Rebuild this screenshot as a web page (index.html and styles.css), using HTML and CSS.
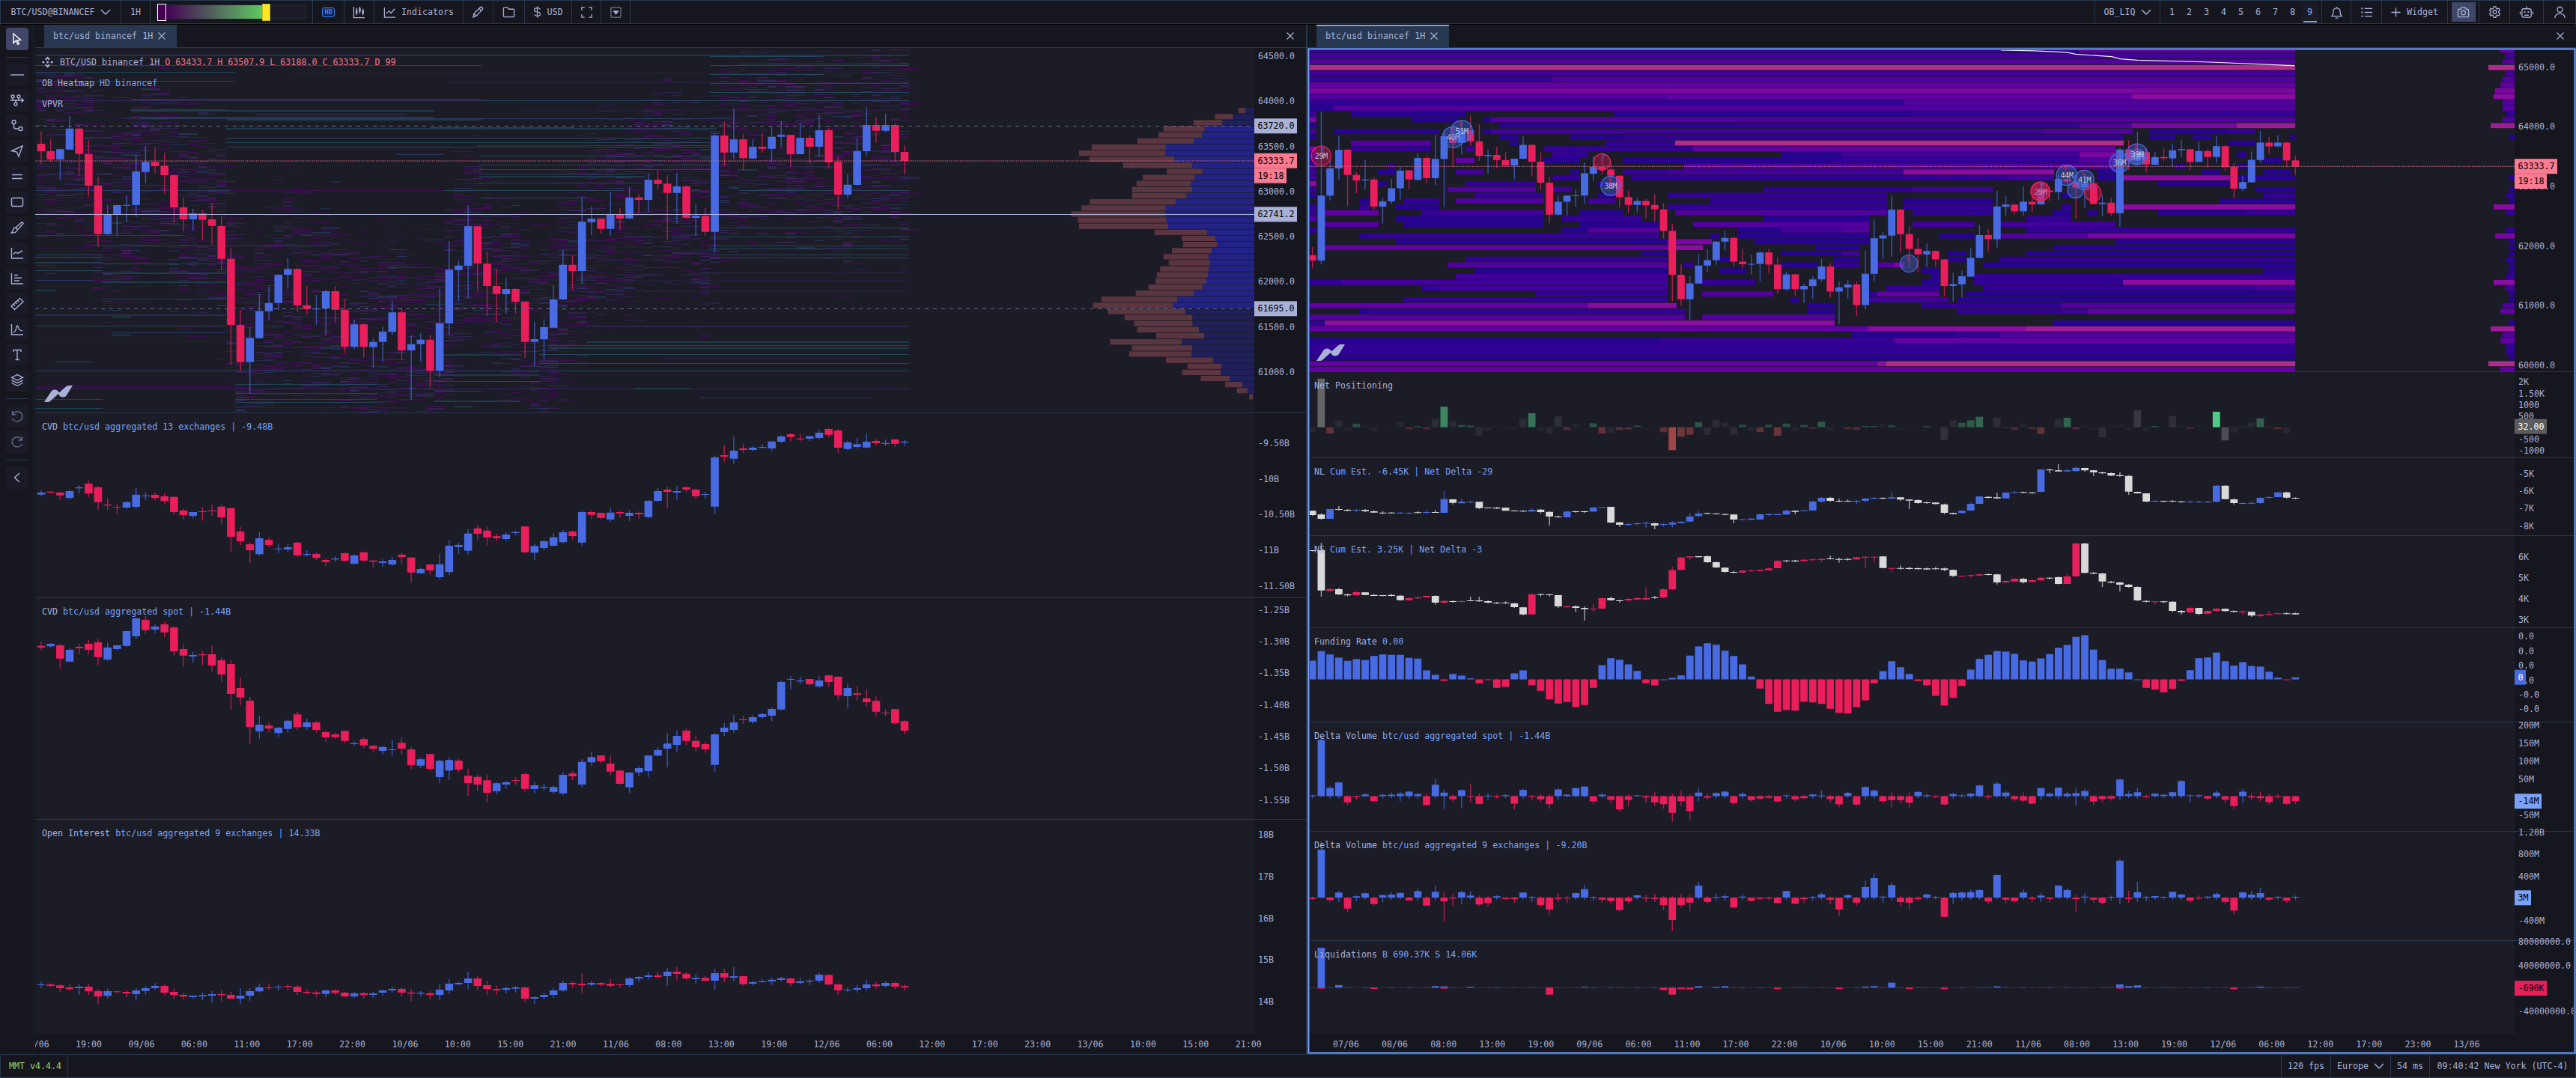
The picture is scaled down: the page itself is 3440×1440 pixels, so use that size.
FILE: index.html
```html
<!DOCTYPE html>
<html lang="en">
<head>
  <meta charset="UTF-8">
  <title>MMT</title>
  <link rel="stylesheet" href="styles.css">
</head>
<body>
  <svg class="defs" width="0" height="0">
    <symbol id="i-chevron" viewBox="0 0 14 8"><path d="M1 1l6 6 6-6"/></symbol>
    <symbol id="i-x" viewBox="0 0 10 10"><path d="M.5 .5l9 9M9.5 .5l-9 9"/></symbol>
    <symbol id="i-candles" viewBox="0 0 18 18"><path d="M1.500 1v15.500H17M5.500 3v10M10 1v9.500M14.500 4v9"/><path d="M4.200 5.500h2.600v5H4.200zM8.700 3h2.600v5H8.700zM13.200 6h2.600v5h-2.600z" class="fill"/></symbol>
    <symbol id="i-line" viewBox="0 0 18 18"><path d="M1.500 2v14H17M4 11l4-4 3 3 5-6"/></symbol>
    <symbol id="i-pencil" viewBox="0 0 18 18"><path d="M2 16l1-5L12.500 1.500q1.500-.5 2.500.5t.5 2.500L6.500 14zM11 4l3 3M3 11l3 3"/></symbol>
    <symbol id="i-folder" viewBox="0 0 18 18"><path d="M1.500 3.500q0-1.500 1.500-1.500h4l2 2.500h6q1.500 0 1.500 1.500v8q0 1.500-1.500 1.500H3q-1.500 0-1.500-1.500z"/></symbol>
    <symbol id="i-dollar" viewBox="0 0 12 18"><path d="M10.500 5Q9.500 3 6 3 1.500 3 1.500 6T6 9t4.500 3T6 15q-3.500 0-4.500-2M6 .5v17"/></symbol>
    <symbol id="i-full" viewBox="0 0 18 18"><path d="M2 6V2h4M12 2h4v4M16 12v4h-4M6 16H2v-4"/></symbol>
    <symbol id="i-dropbox" viewBox="0 0 18 18"><rect x="2" y="2" width="14" height="14" rx="1.500"/><path d="M4.500 6.500h9L9 12.500z" class="fill"/></symbol>
    <symbol id="i-bell" viewBox="0 0 18 18"><path d="M2 14.500q2-1.500 2-5.500 0-6 5-6t5 6q0 4 2 5.500zM7 17h4M9 1v2"/></symbol>
    <symbol id="i-list" viewBox="0 0 18 18"><path d="M6 3.500h11M6 9h11M6 14.500h11"/><path d="M1.500 2.500h2v2h-2zM1.500 8h2v2h-2zM1.500 13.500h2v2h-2z" class="fill"/></symbol>
    <symbol id="i-plus" viewBox="0 0 14 14"><path d="M7 .5v13M.5 7h13"/></symbol>
    <symbol id="i-camera" viewBox="0 0 18 18"><path d="M1.500 6q0-1.500 1.500-1.500h2L6.500 2h5L13 4.500h2q1.500 0 1.500 1.500v8.500q0 1-1.500 1H3q-1.500 0-1.500-1z"/><circle cx="9" cy="9.500" r="3"/></symbol>
    <symbol id="i-gear" viewBox="0 0 18 18"><path d="M7.500 1h3l.5 2.300 1.600.9 2.200-.7 1.500 2.600-1.700 1.600v1.800l1.700 1.600-1.500 2.600-2.200-.7-1.600.9-.5 2.300h-3L7 13.900l-1.600-.9-2.200.7-1.500-2.600 1.700-1.600V7.700L1.700 6.100l1.500-2.600 2.200.7L7 3.300z"/><circle cx="9" cy="8.600" r="2.500"/></symbol>
    <symbol id="i-bot" viewBox="0 0 20 18"><rect x="3.500" y="4" width="13" height="12" rx="2.500"/><path d="M10 4V.5M1 8v4M19 8v4M7 13h6"/><path d="M6.500 7.500h2v2h-2zM11.500 7.500h2v2h-2z" class="fill"/></symbol>
    <symbol id="i-user" viewBox="0 0 18 18"><circle cx="9" cy="5" r="3.700"/><path d="M2 17q0-6 7-6t7 6"/></symbol>
    <symbol id="i-cursor" viewBox="0 0 18 18"><path d="M4 2v12.500l3.300-3.200 2.400 5 1.800-.9-2.400-4.800 4.600-.2z"/></symbol>
    <symbol id="i-hline" viewBox="0 0 18 18"><path d="M-1 9h20"/></symbol>
    <symbol id="i-chain" viewBox="0 0 18 18"><path d="M0 9h17M14.500 6.500L17.500 9l-3 2.500M3 6v3M11 6v3M7 9v3"/><circle cx="3" cy="4" r="2"/><circle cx="11" cy="4" r="2"/><circle cx="7" cy="14" r="2"/></symbol>
    <symbol id="i-nodes" viewBox="0 0 18 18"><circle cx="4.500" cy="4" r="2.500"/><circle cx="13.500" cy="13" r="2.500"/><path d="M4.500 6.500V10q0 3 3 3H11"/></symbol>
    <symbol id="i-send" viewBox="0 0 18 18"><path d="M16 2L1.500 8.500l7 1.500 2.500 6z"/></symbol>
    <symbol id="i-parallel" viewBox="0 0 18 18"><path d="M2 6.500h14M2 11.500h14"/></symbol>
    <symbol id="i-rect" viewBox="0 0 18 18"><rect x="1.500" y="3.500" width="15" height="11" rx="1.500"/></symbol>
    <symbol id="i-brush" viewBox="0 0 18 18"><path d="M7 9l8-7q2 0 2 1.500L9.500 12zM7 9q-3 0-3.500 3T1 16q6 1 8.500-4z"/></symbol>
    <symbol id="i-trend" viewBox="0 0 18 18"><path d="M1.500 2v14H17M4 11q2-4 4-2.500t3 0L16 6"/></symbol>
    <symbol id="i-profile" viewBox="0 0 18 18"><path d="M1.500 2v14H17M5 4.500h5M5 8.300h10M5 12h7"/></symbol>
    <symbol id="i-ruler" viewBox="0 0 18 18"><path d="M1 12L12.500 1.500 17 6 5.500 16.500zM9.500 4.500l2 2M6.500 7l2 2M4 9.500l2 2"/></symbol>
    <symbol id="i-peak" viewBox="0 0 18 18"><path d="M1.500 2v14H17M4 13q3-1 3.500-5T9 4q1 0 1.500 3t5.500 4"/></symbol>
    <symbol id="i-text" viewBox="0 0 18 18"><path d="M4 5V2.500h10V5M9 2.500v13M6.500 15.500h5"/></symbol>
    <symbol id="i-layers" viewBox="0 0 18 18"><path d="M9 1.500l7.500 3.700L9 9 1.500 5.200zM1.500 9L9 12.700 16.500 9M1.500 12.500L9 16.300l7.500-3.800"/></symbol>
    <symbol id="i-undo" viewBox="0 0 18 18"><path d="M2.500 2v5h5M3 6.500q3-4.500 8-3.500 5.500 2 5 7-1.500 5.500-7 6-4.500 0-6.500-4"/></symbol>
    <symbol id="i-redo" viewBox="0 0 18 18"><path d="M15.500 2v5h-5M15 6.500q-3-4.500-8-3.500-5.500 2-5 7 1.500 5.500 7 6 4.500 0 6.500-4"/></symbol>
    <symbol id="i-left" viewBox="0 0 18 18"><path d="M12 3L5.500 9l6.500 6"/></symbol>
    <symbol id="i-binance" viewBox="0 0 16 16"><path class="fill" d="M8 0l3.700 3.800-1.600 1.500L8 3.200 5.900 5.300 4.300 3.800zM8 16l3.700-3.800-1.600-1.500L8 12.800l-2.100-2.100-1.600 1.500zM8 6l2 2-2 2-2-2zM2 6l2 2-2 2-2-2zM14 6l2 2-2 2-2-2z"/></symbol>
    <symbol id="i-logo" viewBox="0 0 38 22"><path class="fill" d="M0 22L10 7q1.500-1.500 4-1.500 4 0 5.500 3.500h1L29 1.500q1-1.500 4-1.500h5L30 13q-1.500 2.500-5 2.500-4 .5-5.500-4h-1L9 20q-1.500 2-4 2z"/></symbol>
  </svg>

  <div class="app">
    <header class="topbar">
      <div class="cell symbol">BTC/USD@BINANCEF <svg class="chev"><use href="#i-chevron"/></svg></div>
      <div class="cell tf">1H</div>
      <div class="cell slider-cell">
        <div class="slider"><i class="knob low"></i><i class="ramp"></i><i class="knob high"></i></div>
      </div>
      <div class="cell hd"><span>HD</span></div>
      <div class="cell w40"><svg class="icon"><use href="#i-candles"/></svg></div>
      <div class="cell indicators"><svg class="icon"><use href="#i-line"/></svg>Indicators</div>
      <div class="cell w40"><svg class="icon"><use href="#i-pencil"/></svg></div>
      <div class="cell w42"><svg class="icon"><use href="#i-folder"/></svg></div>
      <div class="cell usd"><svg class="dollar"><use href="#i-dollar"/></svg>USD</div>
      <div class="cell w39"><svg class="icon"><use href="#i-full"/></svg></div>
      <div class="cell w39 last"><svg class="icon"><use href="#i-dropbox"/></svg></div>
      <div class="spacer"></div>
      <div class="cell layout">OB_LIQ <svg class="chev"><use href="#i-chevron"/></svg></div>
      <div class="cell pages">
        <span>1</span><span>2</span><span>3</span><span>4</span><span>5</span><span>6</span><span>7</span><span>8</span><span class="on">9</span>
      </div>
      <div class="cell w39"><svg class="icon"><use href="#i-bell"/></svg></div>
      <div class="cell w41"><svg class="icon"><use href="#i-list"/></svg></div>
      <div class="cell widget-btn"><svg class="plus"><use href="#i-plus"/></svg>Widget</div>
      <div class="cell w42"><b class="shot"><svg class="icon"><use href="#i-camera"/></svg></b></div>
      <div class="cell w41"><svg class="icon"><use href="#i-gear"/></svg></div>
      <div class="cell w45"><svg class="icon wide"><use href="#i-bot"/></svg></div>
      <div class="cell w42"><svg class="icon"><use href="#i-user"/></svg></div>
    </header>

    <div class="main">
      <nav class="tools">
        <button class="on"><svg><use href="#i-cursor"/></svg></button>
        <hr>
        <button><svg><use href="#i-hline"/></svg></button>
        <button><svg><use href="#i-chain"/></svg></button>
        <button><svg><use href="#i-nodes"/></svg></button>
        <button><svg><use href="#i-send"/></svg></button>
        <button><svg><use href="#i-parallel"/></svg></button>
        <button><svg><use href="#i-rect"/></svg></button>
        <button><svg><use href="#i-brush"/></svg></button>
        <button><svg><use href="#i-trend"/></svg></button>
        <button><svg><use href="#i-profile"/></svg></button>
        <button><svg><use href="#i-ruler"/></svg></button>
        <button><svg><use href="#i-peak"/></svg></button>
        <button><svg><use href="#i-text"/></svg></button>
        <button><svg><use href="#i-layers"/></svg></button>
        <hr>
        <button class="off"><svg><use href="#i-undo"/></svg></button>
        <button class="off"><svg><use href="#i-redo"/></svg></button>
        <hr>
        <button><svg><use href="#i-left"/></svg></button>
      </nav>

      <section class="widget left">
        <div class="tabs">
          <div class="tab">btc/usd binancef 1H <svg class="x"><use href="#i-x"/></svg></div>
          <svg class="x close"><use href="#i-x"/></svg>
        </div>
        <div class="panes">
          <div class="pane l-price">
            <svg class="plot" id="l-price"></svg><svg class="axis" id="l-price-axis"></svg>
            <div class="legend">
              <p><svg class="coin"><use href="#i-binance"/></svg>BTC/USD binancef 1H <em>O 63433.7 H 63507.9 L 63188.0 C 63333.7 D 99</em></p>
              <p>OB Heatmap <a>HD binancef</a></p>
              <p>VPVR</p>
            </div>
            <svg class="logo"><use href="#i-logo"/></svg>
          </div>
          <div class="pane l-cvd">
            <svg class="plot" id="l-cvd"></svg><svg class="axis" id="l-cvd-axis"></svg>
            <div class="legend"><p>CVD <a>btc/usd aggregated 13 exchanges | -9.48B</a></p></div>
          </div>
          <div class="pane l-spot">
            <svg class="plot" id="l-spot"></svg><svg class="axis" id="l-spot-axis"></svg>
            <div class="legend"><p>CVD <a>btc/usd aggregated spot | -1.44B</a></p></div>
          </div>
          <div class="pane l-oi">
            <svg class="plot" id="l-oi"></svg><svg class="axis" id="l-oi-axis"></svg>
            <div class="legend"><p>Open Interest <a>btc/usd aggregated 9 exchanges | 14.33B</a></p></div>
          </div>
        </div>
        <div class="times" id="l-times"></div>
      </section>

      <section class="widget right">
        <div class="tabs">
          <div class="tab active">btc/usd binancef 1H <svg class="x"><use href="#i-x"/></svg></div>
          <svg class="x close"><use href="#i-x"/></svg>
        </div>
        <div class="panes">
          <div class="pane r-price">
            <svg class="plot" id="r-price"></svg><svg class="axis" id="r-price-axis"></svg>
            <svg class="logo"><use href="#i-logo"/></svg>
          </div>
          <div class="pane r-net">
            <svg class="plot" id="r-net"></svg><svg class="axis" id="r-net-axis"></svg>
            <div class="legend"><p>Net Positioning</p></div>
          </div>
          <div class="pane r-nl">
            <svg class="plot" id="r-nl"></svg><svg class="axis" id="r-nl-axis"></svg>
            <div class="legend"><p>NL <a>Cum Est. -6.45K | Net Delta -29</a></p></div>
          </div>
          <div class="pane r-ns">
            <svg class="plot" id="r-ns"></svg><svg class="axis" id="r-ns-axis"></svg>
            <div class="legend"><p>NS <a>Cum Est. 3.25K | Net Delta -3</a></p></div>
          </div>
          <div class="pane r-fund">
            <svg class="plot" id="r-fund"></svg><svg class="axis" id="r-fund-axis"></svg>
            <div class="legend"><p>Funding Rate <a>0.00</a></p></div>
          </div>
          <div class="pane r-dvs">
            <svg class="plot" id="r-dvs"></svg><svg class="axis" id="r-dvs-axis"></svg>
            <div class="legend"><p>Delta Volume <a>btc/usd aggregated spot | -1.44B</a></p></div>
          </div>
          <div class="pane r-dva">
            <svg class="plot" id="r-dva"></svg><svg class="axis" id="r-dva-axis"></svg>
            <div class="legend"><p>Delta Volume <a>btc/usd aggregated 9 exchanges | -9.20B</a></p></div>
          </div>
          <div class="pane r-liq">
            <svg class="plot" id="r-liq"></svg><svg class="axis" id="r-liq-axis"></svg>
            <div class="legend"><p>Liquidations <a>B 690.37K S 14.06K</a></p></div>
          </div>
        </div>
        <div class="times" id="r-times"></div>
      </section>
    </div>

    <footer class="status">
      <div class="ver">MMT v4.4.4</div>
      <div class="spacer"></div>
      <div class="st fps">120 fps</div>
      <div class="st region">Europe <svg class="chev"><use href="#i-chevron"/></svg></div>
      <div class="st ping">54 ms</div>
      <div class="st clock">09:40:42 New York (UTC-4)</div>
    </footer>
  </div>

  <script src="charts.js"></script>
</body>
</html>
```
FILE: styles.css
```css
* { box-sizing: border-box; }
html, body { height: 1440px; overflow: hidden; }
body {
  margin: 0;
  background: #16161e;
  color: #a9b1d6;
  font: 11.65px/16px 'DejaVu Sans Mono', 'Liberation Mono', monospace;
}
p, hr { margin: 0; }
svg { display: block; fill: none; stroke: currentColor; stroke-width: 1.4; overflow: visible; flex: none; }
svg .fill { fill: currentColor; stroke: none; }
.defs { position: absolute; }
.app { width: 3440px; height: 1440px; display: flex; flex-direction: column; overflow: hidden; }
.spacer { flex: 1; }
.icon { width: 17px; height: 17px; }
.icon.wide { width: 20px; }
.chev { width: 14px; height: 8px; }

/* top bar */
.topbar {
  height: 33px;
  flex: none;
  display: flex;
  border: 1px solid #27384d;
  border-bottom: 0;
  box-shadow: inset 0 -1px #000, inset 0 -2px #27384d;
}
.cell { height: 30px; display: flex; align-items: center; justify-content: center; border-right: 1px solid #27384d; white-space: pre; }
.cell:last-child { border-right: 0; }
.symbol { width: 161px; gap: 0; }
.tf { width: 39px; }
.slider-cell { width: 217px; }
.slider { display: flex; align-items: center; width: 200px; height: 20px; border: 1px solid #232838; border-radius: 4px; background: #1a1b26; }
.ramp { width: 128px; height: 18px; background: linear-gradient(90deg, #440154, #5ec962); }
.knob { width: 12px; height: 23px; border: 1px solid #fff; }
.low { background: #440154; }
.high { background: #fde725; border-color: #c9b81f; width: 11px; }
.hd { width: 42px; }
.hd span { border: 1.500px solid #3b82f6; background: #11244a; color: #3b82f6; border-radius: 3px; width: 17px; height: 13px; font-size: 8.500px; line-height: 10px; text-align: center; font-weight: bold; }
.w39 { width: 39px; }
.w40 { width: 40px; }
.w41 { width: 41px; }
.w42 { width: 42px; }
.w45 { width: 45px; }
.indicators { width: 119px; gap: 7px; }
.usd { width: 63px; gap: 7px; }
.dollar { width: 11px; height: 16px; }
.layout { width: 88px; border-left: 1px solid #27384d; gap: 0; }
.pages { width: 216px; }
.pages span { width: 23px; height: 27px; line-height: 27px; text-align: center; }
.pages .on { color: #7aa2f7; background: linear-gradient(#7aa2f7, #7aa2f7) center bottom / 18px 2px no-repeat #1a1b26; }
.widget-btn { width: 88px; gap: 8px; }
.plus { width: 13px; height: 13px; }
.shot { width: 32px; height: 26px; background: #404667; display: flex; align-items: center; justify-content: center; }

.main { flex: 1; min-height: 0; display: flex; }

/* drawing tools */
.tools { width: 47px; padding: 4px 9px 0 8px; border-right: 1px solid #000; box-shadow: inset -1px 0 #27384d; display: flex; flex-direction: column; gap: 4px; }
.tools button { width: 30px; height: 30px; flex: none; padding: 6px; border: 0; border-radius: 4px; background: #1a1b26; color: #a9b1d6; }
.tools svg { width: 18px; height: 18px; }
.tools .on { background: #404667; color: #fff; }
.tools .off { color: #646a86; }
.tools hr { width: 30px; border: 0; height: 1px; background: #27384d; margin: 5px 0 4px; flex: none; }

/* chart widgets */
.widget { display: flex; flex-direction: column; position: relative; }
.left { width: 1699px; border-right: 2px solid #27384d; }
.right { width: 1694px; }
.right::after {
  content: "";
  position: absolute;
  inset: 31px 0 0;
  box-shadow: inset 0 0 0 1px #4a68ac, inset 0 0 0 2px #7aa2f7, inset 0 0 0 3px #3c5590;
}
.tabs { height: 31px; flex: none; display: flex; align-items: center; padding-left: 12px; border-bottom: 1px solid #27384d; }
.tab { width: 177px; height: 30px; display: flex; align-items: center; padding-left: 12px; background: #283850; white-space: pre; }
.tab.active { box-shadow: inset 0 2px #7aa2f7; }
.x { width: 10px; height: 10px; stroke-width: 1.2; }
.close { margin: 0 16px 0 auto; }
.panes { flex: none; background: #1b1c26; }
.pane { display: flex; position: relative; border-bottom: 1px solid #27384d; }
.pane:last-child { border-bottom: 0; }
.plot { flex: 1; height: 100%; overflow: hidden; stroke: none; }
.axis { width: 69px; height: 100%; background: #16161e; stroke: none; }
.right .axis { width: 82px; }
.axis text { fill: #a9b1d6; }
.legend { position: absolute; left: 9px; top: 4px; }
.legend p { height: 28px; line-height: 28px; white-space: pre; display: flex; }
.legend em { font-style: normal; color: #f7768e; }
.legend a { color: #7aa2f7; }
.coin { width: 15px; height: 16px; margin: 6px 9px 0 0; }
.logo { position: absolute; left: 12px; bottom: 14px; width: 38px; height: 22px; }
.l-price { height: 488px; }
.l-price .legend { top: 5px; }
.l-cvd { height: 247px; }
.l-spot { height: 296px; }
.l-oi { height: 286px; }
.r-price { height: 433px; }
.r-net { height: 115px; }
.r-nl { height: 104px; }
.r-ns { height: 123px; }
.r-fund { height: 126px; }
.r-dvs, .r-dva { height: 146px; }
.r-liq { height: 124px; }
.times { flex: 1; display: flex; overflow: hidden; line-height: 28px; background: #16161e; }
.times span { flex: none; text-align: center; }
#l-times span { width: 70.400px; }
#l-times span:first-child { margin-left: -34px; }
#r-times span { width: 65.070px; }
#r-times span:first-child { margin-left: 19px; }

/* plot colours */
.up { fill: #486be4; }
.down { fill: #ea1e5b; }
.white { fill: #d9d9d9; }
.wick { opacity: .72; }
.poc { stroke: #a9b1d6; stroke-width: 1; }
.area { stroke: #646a86; stroke-width: 1; stroke-dasharray: 5 6; }
.last { stroke: #d0667e; stroke-width: 1; stroke-dasharray: 1.500 1; }
.vwap { fill: none; stroke: #f4eaf8; stroke-width: 1.2; }
.bubble { stroke-width: 1.2; fill-opacity: .38; }
.bubble.up { stroke: #486be4; }
.bubble.down { stroke: #ea1e5b; }
.tag { fill: #b9bfdd; font-size: 10.500px; letter-spacing: -.7px; text-anchor: middle; }

/* status bar */
.status { height: 32px; flex: none; display: flex; border: 1px solid #27384d; }
.ver { width: 90px; padding-left: 11px; line-height: 31px; color: #9ece6a; border-right: 1px solid #27384d; }
.st { display: flex; align-items: center; justify-content: center; border-left: 1px solid #27384d; white-space: pre; }
.fps { width: 66px; }
.region { width: 80px; gap: 0; }
.ping { width: 52px; }
.clock { width: 195px; }
```
FILE: charts.js
```js
const NS = 'http://www.w3.org/2000/svg';

function add(id, tag, attrs, text) {
  const el = document.createElementNS(NS, tag);
  for (const k in attrs) el.setAttribute(k, attrs[k]);
  if (text !== undefined) el.textContent = text;
  document.getElementById(id).appendChild(el);
  return el;
}

const CLS = { b: 'up', r: 'down', w: 'white' };
const box = (x, y, w, h) => `M${x.toFixed(2)} ${y.toFixed(2)}h${w}v${h.toFixed(2)}h${-w}z`;

// "r348 396 426 476" = colour, high, body top, body bottom, low
function parse(s) {
  const t = s.trim().split(/\s+/), out = [];
  for (let i = 0; i < t.length; i += 4) {
    out.push({ c: t[i][0], v: [+t[i].slice(1), +t[i + 1], +t[i + 2], +t[i + 3]] });
  }
  return out;
}

const LEFT = { x0: 8, step: 12.67, body: 10.6 };
const RIGHT = { x0: 6.7, step: 11.72, body: 9.8 };

function candles(id, data, grid, y) {
  const body = { b: '', r: '', w: '' }, wick = { b: '', r: '', w: '' };
  data.forEach((d, i) => {
    const x = grid.x0 + i * grid.step;
    const [h, t, b, l] = d.v.map(y);
    wick[d.c] += box(x - 0.7, h, 1.4, l - h);
    body[d.c] += box(x - grid.body / 2, t, grid.body, Math.max(b - t, 1));
  });
  for (const c in body) {
    if (!body[c]) continue;
    add(id, 'path', { d: wick[c], class: CLS[c] + ' wick' });
    add(id, 'path', { d: body[c], class: CLS[c] });
  }
}

function axis(id, labels, badges) {
  for (const [text, y] of labels) add(id, 'text', { x: 5, y: y + 4 }, text);
  for (const [text, y, w, bg, fg] of badges || []) {
    add(id, 'rect', { x: 0, y: y - 10, width: w, height: 20, fill: bg });
    add(id, 'text', { x: 4.500, y: y + 4, style: `fill:${fg}` }, text);
  }
}

/* ---- price ---- */
const early = parse(`
r954 1004 1036 1084 b132 642 1036 1060 b417 477 642 671 b278 365 477 545 r359 364 517 704 r500 517 550 627
b427 545 550 604 r532 545 709 724 b657 677 709 812 b541 598 677 692 b467 491 598 666 r489 489 545 603
b385 414 547 553 r397 414 536 567 b273 420 536 579 b243 282 420 712 r228 285 323 465 b187 243 323 394
r157 246 314 341 r210 314 402 432 b361 396 403 509`);

const price = parse(`
r348 396 426 476 r378 426 459 470 b418 418 459 543 b285 335 419 421 r335 335 437 525 r381 437 564 608
r529 564 758 809 b641 680 758 762 b640 642 680 765 b605 641 644 708 b441 507 642 690 b404 469 509 554
r410 469 486 514 r432 484 522 597 r519 522 651 713 r612 651 699 747 b657 675 699 744 r663 675 701 782
r633 699 725 800 r688 726 857 903 r813 857 1122 1281 r1061 1122 1271 1308 b1131 1174 1271 1397
b998 1067 1175 1177 b968 1034 1067 1105 b919 921 1034 1062 b854 898 921 977 r893 898 1043 1071
r966 1043 1059 1082 b1002 1056 1060 1121 b980 987 1056 1163 r966 987 1061 1112 r1017 1061 1210 1236
b1101 1120 1210 1218 r1116 1120 1210 1253 b1175 1190 1211 1293 b1131 1150 1190 1270 b1026 1072 1150 1163
r1052 1072 1224 1262 b1164 1199 1224 1421 b1155 1181 1199 1269 r1162 1181 1306 1373 b977 1116 1306 1333
b786 901 1116 1162 b864 884 902 1026 b643 727 885 1014 r724 727 876 987 r828 876 966 1086
r897 966 998 1110 b933 978 999 1077 r975 978 1029 1077 r1029 1029 1190 1255 b1110 1179 1190 1284
b1098 1131 1180 1260 b962 1020 1133 1133 b820 881 1020 1022 r846 881 906 980 b614 708 906 957
b647 696 710 762 r696 696 737 756 b588 680 737 765 r654 680 696 742 b570 612 695 698 r597 611 621 675
b516 541 621 669 r500 541 557 579 r522 556 593 783 b512 567 593 715 r563 567 693 696 b638 685 693 768
r654 685 749 765 b354 363 749 833 r307 363 431 486 b255 379 431 459 r357 379 454 501 b378 408 455 456
r354 408 416 433 b326 368 416 467 b305 361 368 411 r361 361 438 489 b312 372 438 438 r361 372 408 474
b280 342 408 444 r334 342 470 491 r447 468 600 659 b519 560 600 615 b374 425 561 564 b249 321 426 443
r288 321 344 390 b276 321 344 350 r316 321 429 468 r402 429 465 519`);

const yL = v => v / 3 - 4;
const yR = v => 55.8 + v * 0.2203;

/* ---- order book heatmap, left ---- */
let seed = 90607;
function rnd() {
  seed = (seed * 1664525 + 1013904223) % 4294967296;
  return seed / 4294967296;
}
const HEAT = { p: '#4c0a64', v: '#432a74', b: '#2f4478', d: '#2a2246', t: '#22586a', g: '#1f7a6c' };
const heat = { p: '', v: '', b: '', d: '', t: '', g: '' };
price.forEach((d, i) => {
  const x = LEFT.x0 + (i - 0.5) * LEFT.step;
  const mid = yL((d.v[1] + d.v[2]) / 2);
  for (let n = 0; n < 58; n++) {
    const far = n % 4 ? 22 + rnd() * 85 : rnd() * 160;
    const y = Math.round(mid + (rnd() < 0.5 ? -far : far));
    if (y < 1 || y > 486) continue;
    const r = rnd(), c = r < 0.5 ? 'p' : r < 0.7 ? 'd' : r < 0.92 ? 'v' : r < 0.995 ? 'b' : 't';
    const h = rnd() < 0.15 ? 2 : 1;
    heat[c] += box(x, y, 12.67 * (rnd() < 0.25 ? 2 : 1), h);
  }
});
for (const c in heat) add('l-price', 'path', { d: heat[c], fill: HEAT[c], opacity: c === 'p' ? 0.62 : 0.5 });

// resting orders: x1, x2, y, colour, thickness
[[0, 1167, 9, 'b', 2], [901, 1053, 11, 't', 1], [0, 596, 23, 't', 1], [901, 1167, 23, 't', 1], [940, 1167, 21, 't', 1],
 [0, 267, 32, 't', 1], [343, 1167, 33, 'd', 2], [901, 1053, 35, 't', 1], [0, 267, 44, 't', 1], [550, 950, 45, 'd', 2],
 [901, 1167, 47, 't', 1], [901, 1167, 59, 't', 1], [128, 596, 68, 't', 2], [0, 1167, 70, 'v', 1], [128, 255, 82, 'b', 1],
 [596, 1167, 70, 't', 1], [648, 1167, 82, 'd', 2], [128, 533, 83, 't', 2], [293, 495, 88, 'b', 1], [128, 533, 92, 't', 2],
 [140, 930, 94, 'b', 1], [255, 596, 95, 't', 2], [528, 720, 106, 't', 1], [255, 910, 107, 't', 2], [255, 901, 120, 't', 1],
 [255, 901, 126, 't', 1], [590, 901, 130, 'b', 1], [255, 901, 132, 't', 1], [482, 546, 142, 'b', 1], [593, 901, 144, 't', 1],
 [593, 901, 156, 't', 1], [593, 901, 162, 't', 1], [593, 800, 168, 't', 1], [593, 815, 171, 't', 2], [593, 810, 180, 't', 1],
 [0, 260, 190, 'b', 1], [267, 546, 190, 'p', 1], [546, 786, 190, 't', 1], [940, 1167, 190, 't', 1], [593, 736, 200, 't', 1],
 [901, 1167, 240, 't', 1], [901, 1167, 252, 't', 1], [901, 1167, 264, 't', 1], [90, 392, 264, 't', 1], [901, 1167, 268, 't', 1],
 [901, 1167, 276, 't', 1], [0, 90, 276, 't', 1], [901, 1167, 280, 't', 1], [0, 90, 279, 't', 2], [0, 90, 286, 't', 2],
 [90, 240, 288, 't', 1], [0, 90, 297, 't', 1], [90, 255, 300, 't', 2], [915, 1167, 299, 'd', 2], [0, 77, 310, 'b', 1],
 [90, 255, 312, 't', 2], [780, 1167, 310, 'd', 2], [0, 200, 250, 'b', 1], [825, 1167, 324, 'd', 2], [0, 27, 323, 't', 2],
 [90, 260, 335, 'b', 1], [0, 255, 356, 'b', 2], [103, 128, 359, 'g', 1], [0, 255, 371, 't', 1], [736, 1167, 371, 'v', 2],
 [103, 128, 383, 'g', 1], [103, 255, 380, 'b', 1], [0, 260, 392, 'p', 1], [736, 1167, 392, 't', 2], [685, 1167, 397, 't', 1],
 [685, 1167, 400, 't', 2], [540, 650, 409, 't', 2], [673, 1167, 409, 't', 1], [837, 1129, 414, 'v', 1], [673, 1167, 421, 't', 1],
 [27, 77, 419, 't', 1], [0, 700, 431, 'b', 1], [700, 1167, 431, 't', 1], [533, 673, 436, 't', 2], [533, 673, 445, 't', 1],
 [267, 457, 449, 't', 1], [0, 290, 452, 'p', 1], [0, 1167, 455, 'v', 1], [800, 875, 455, 'g', 1], [533, 596, 458, 't', 1],
 [267, 457, 461, 't', 1], [0, 90, 469, 't', 1], [267, 457, 469, 't', 1], [888, 1117, 467, 'b', 1], [267, 457, 473, 't', 1],
 [533, 648, 471, 't', 2], [560, 584, 479, 'g', 1], [0, 90, 481, 't', 1], [267, 500, 480, 'p', 1]
].forEach(([a, b, y, c, h]) => add('l-price', 'rect', { x: a, y, width: b - a, height: h, fill: HEAT[c], opacity: h > 1 ? 0.5 : 0.72 }));

/* ---- volume profile: left end and split of each row, measured to x = 1176 ---- */
const profile = [[1119, 1144], [1034, 1099], [956, 1061], [848, 997], [830, 988], [754, 957], [589, 857], [543, 854],
 [580, 888], [702, 952], [860, 989], [773, 961], [751, 946], [735, 952], [735, 932], [581, 892], [552, 857], [515, 854],
 [539, 859], [543, 865], [816, 1006], [914, 1036], [919, 1041], [879, 1022], [848, 1011], [867, 1017], [836, 1011],
 [824, 1009], [820, 1003], [794, 989], [748, 957], [624, 898], [593, 882], [647, 928], [708, 953], [742, 953], [753, 976],
 [822, 996], [655, 914], [734, 952], [724, 949], [857, 1027], [935, 1057], [916, 1055], [983, 1087], [1071, 1133],
 [1113, 1151], [1157, 1171]];
profile.forEach(([a, b], k) => {
  const y = yL(263 + k * 24.4) - 3.6;
  const px = v => 1628 - (1176 - v) / 2.703;
  add('l-price', 'rect', { x: px(a), y, width: px(b) - px(a), height: 7.2, fill: '#5b3641' });
  add('l-price', 'rect', { x: px(b), y, width: 1628 - px(b), height: 7.2, fill: k > 2 && k < 33 ? '#232387' : '#1f1f5a' });
});

candles('l-price', price, LEFT, yL);
add('l-price', 'path', { d: 'M0 104.500H1628M0 348.500H1628', class: 'area' });
add('l-price', 'path', { d: 'M0 151H1628', class: 'last' });
add('l-price', 'path', { d: 'M0 222.500H1628', class: 'poc' });
axis('l-price-axis',
  [['64500.0', 10.7], ['64000.0', 70.7], ['63500.0', 131.5], ['63000.0', 191.5], ['62500.0', 252], ['62000.0', 312], ['61500.0', 372.5], ['61000.0', 432.5]],
  [['63720.0', 104.3, 57, '#a9b1d6', '#000'], ['63333.7', 150.7, 57, '#fa7a91', '#000'], ['19:18', 170.7, 43, '#fa7a91', '#000'],
   ['62741.2', 222.3, 57, '#a9b1d6', '#000'], ['61695.0', 348.3, 57, '#a9b1d6', '#000']]);

/* ---- liquidity heatmap, right: "x:level" steps per price row, level 0 = nothing ---- */
const PLASMA = ['', '#270293', '#330098', '#42009c', '#5200a0', '#6200a6', '#7c06a5', '#8c0ba2', '#a01b98', '#b12b8d'];
const DEPTH = [0, 8, 11, 12, 16, 19, 26, 28, 32, 35];
const rows = `0:2 1028:5
0:3
0:4
0:9
0:3
0:2 324:4
0:5
0:6
0:4 477:5 1098:7
0:2 793:4
0:1 32:4
0:3 9:0 55:1 208:0 406:1 805:2
0:6 9:0 137:1 197:0 231:1 242:4
0:1 9:0 254:1 570:2 1028:4 1098:6 1238:8
0:3 9:0 32:1 173:0 231:1 242:3 980:4 1099:0 1122:1 1227:2 1263:0
0:1 9:0 254:1 279:0 348:1 418:2 1087:0 1122:1 1157:0 1179:1 1205:0 1309:1
55:4 162:0 266:1 279:0 395:2 488:9 1087:0 1227:1 1263:0
0:6 9:0 55:2 162:0 208:3 220:0 313:2 512:5 1076:0
0:2 9:0 324:2 372:0 629:1 711:3 1028:6 1076:0 1238:1 1251:0
0:1 9:0 195:5 220:0 313:1 361:0 418:1 699:2 1028:4 1076:0 1274:1 1298:0
0:3 9:0 103:1 115:0 500:4 1076:0 1156:1 1170:0 1238:1 1251:0
0:3 9:0 90:1 115:0 195:3 232:0 348:1 361:0 418:2 477:3 793:7 994:0 1051:1 1076:0 1191:1 1216:0 1274:1 1310:0
0:3 9:0 324:2 361:0 430:2 933:3 994:0 1051:1 1076:0 1085:7 1229:1
0:7 9:0 90:1 103:0 208:2 302:0 384:1 420:0 1132:1 1229:0
0:2 9:0 184:4 302:0 324:3 350:0 606:2 804:3 912:0 1262:1
0:2 9:0 220:2 313:0 384:1 410:0 477:2 771:0 1004:1 1017:0 1274:2
67:1 80:0 126:2 173:0 195:4 313:0 372:3 408:0 535:2 771:0 793:1 912:0 1215:1
0:2 9:0 67:2 80:0 114:1 173:0 477:2 771:0 793:2 912:0 1004:2 1017:0 1085:7
0:2 9:0 20:5 92:0 149:2 172:3 313:0 360:1 419:0 488:4 771:0 805:2 912:0 992:1 1017:0 1039:1 1052:0 1132:1 1250:2
0:4 9:0 114:1 313:0 336:2 443:0 606:1 747:0 957:2 1017:0
20:4 92:0 126:1 313:0 360:1 466:0 512:4 747:0 805:3 888:0 918:3 1076:0
0:2 9:0 336:1 372:4 466:0 571:1 629:3 711:4 747:0 957:2
67:1 78:2 466:0 535:1 548:0 571:1 747:0 840:1 888:0 918:4 1039:6
114:1 478:6 537:0 594:1 747:0 1075:1
20:5 478:7 525:0 676:1 735:0 992:1
442:1 478:0 629:1 711:3 735:0 852:1 877:0 957:1
208:2 478:0 547:1 560:0 699:1 735:0 852:1 877:0 922:2
184:4 478:0 500:2 513:0 629:1 678:0 699:2 735:0 758:4 781:6 794:0 899:1
220:1 478:0 547:1 583:0 817:1 841:0 1274:1
195:3 478:0 829:1 841:0 887:2
0:2 43:3 478:0 524:2 595:0 817:1 841:0 887:2 1086:7
149:2 172:3 478:0 770:2 841:0 899:2 1261:3
301:2 478:0 524:4 619:0 745:2 758:5 841:0 876:1
126:2 478:0 641:1 654:0 745:3 853:0 864:1
0:5 372:7 490:0 664:1 701:0 817:2 1004:4
67:1 78:2 501:0 664:1 701:0 864:2 1004:3 1039:5
0:4 501:0 524:4 701:0
0:2 20:7 701:0 992:1
0:5 746:7 957:8
724:1 863:2 922:4
0:1 466:2 781:5
0:2
0:2
0:1
0:5 758:7 770:9
0:5`.split('\n');
rows.forEach((row, k) => {
  const y = 3 + k * 7.757 - 3.4;
  const steps = row.split(' ').map(s => s.split(':').map(Number));
  steps.forEach(([x, level], i) => {
    if (!level) return;
    const end = i + 1 < steps.length ? steps[i + 1][0] : 1316;
    add('r-price', 'rect', { x: x ? x + 3 : 0, y, width: end - x + (x ? 0 : 3), height: 6.7, fill: PLASMA[level] });
  });
  const lastLevel = steps[steps.length - 1][1];
  if (lastLevel) add('r-price', 'rect', { x: 1612 - DEPTH[lastLevel], y, width: DEPTH[lastLevel], height: 6.7, fill: PLASMA[lastLevel] });
});

candles('r-price', early.concat(price), RIGHT, yR);
add('r-price', 'path', { d: 'M926 3L970 3.800 1014 5.800 1026 8.300 1074 11.700 1085 14.700 1108 16.300 1206 19 1318 23.700', class: 'vwap' });

[[18.3, 144.3, 13.2, 'r', '29M'], [194.5, 119.3, 14.2, 'b', '40M'], [206, 111.3, 14.5, 'b', '51M'], [393.4, 152.3, 11, 'r', ''],
 [404.8, 184.3, 13, 'b', '38M'], [803.2, 288, 11.5, 'b', ''], [978.7, 191.7, 12.8, 'r', '29M'], [979, 192, 12, 'r', ''],
 [1013.9, 170, 13.7, 'b', '44M'], [1025.6, 190, 10.7, 'b', ''], [1037.4, 176.3, 13, 'b', '41M'], [1049, 193.7, 11, 'r', ''],
 [1084.3, 153.3, 13, 'b', '36M'], [1107.8, 145, 10, 'b', '37M'], [1107.8, 142.3, 14.2, 'b', '39M']
].forEach(([x, y, r, c, t]) => {
  add('r-price', 'circle', { cx: x, cy: y, r, class: 'bubble ' + CLS[c] });
  // share of the opposite side
  add('r-price', 'path', { d: `M${x} ${y}V${y - r}A${r} ${r} 0 0 ${c === 'b' ? 0 : 1} ${c === 'b' ? x - r * 0.3 : x + r * 0.4} ${y - r * 0.93}z`, class: c === 'b' ? 'down' : 'up', opacity: 0.4 });
  if (t) add('r-price', 'text', { x, y: y + 4, class: 'tag' }, t);
});
add('r-price', 'path', { d: 'M0 158.300H1612', class: 'last' });
axis('r-price-axis',
  [['65000.0', 25.7], ['64000.0', 105], ['63000.0', 184.7], ['62000.0', 264.5], ['61000.0', 344.3], ['60000.0', 424]],
  [['63333.7', 158.2, 57, '#fa7a91', '#000'], ['19:18', 178.2, 43, '#fa7a91', '#000']]);

/* ---- left sub panes ---- */
const cvd = parse(`
b315 324 332 339 r318 320 324 329 r322 324 335 354 b314 318 346 350 b294 303 307 328 r276 288 328 342
r296 303 362 393 r346 372 376 393 r369 381 384 409 b357 362 384 390 b306 332 381 390 b323 336 339 354
r324 333 346 354 r327 339 358 371 r340 341 402 413 r387 395 414 431 b402 402 417 426 r383 399 402 437
r373 396 399 417 r373 380 423 449 r384 386 501 561 r461 480 519 535 r524 531 555 606 b483 507 571 575
r503 513 534 543 b529 548 551 567 b531 543 552 561 r522 524 576 581 b555 570 574 580 r565 570 585 594
r589 594 602 619 b579 588 592 601 r563 567 597 601 b570 576 609 613 r561 563 596 603 r594 596 601 624
b591 600 606 622 b581 594 612 617 r563 573 582 609 r582 584 644 684 b624 630 647 649 r609 612 636 654
b570 611 663 671 b513 537 642 655 b524 534 542 570 b470 488 557 572 r454 467 489 514 r459 476 504 537
r489 499 507 519 b483 492 510 518 b477 482 486 495 r459 460 563 567 b527 538 565 594 b516 519 546 555
b486 503 537 538 b474 483 523 528 r476 480 498 512 b398 402 524 537 r396 402 413 429 r405 405 425 430
b384 404 432 441 r399 402 407 425 b393 405 417 437 r400 405 411 429 b353 357 422 426 b306 318 357 361
r300 312 321 387 b297 318 324 353 r297 303 312 321 r308 312 339 350 b321 330 333 348 b175 183 380 411
r135 174 180 200 b100 156 188 209 r128 147 153 166 b138 144 153 159 b130 141 145 147 b117 119 147 158
b94 99 120 125 r86 90 101 119 r90 107 111 117 b96 98 108 117 b71 84 105 111 r65 69 92 102
r70 75 144 165 b118 123 149 155 b105 130 141 149 b86 120 143 147 r109 117 126 135 b111 125 129 138
r110 111 128 140 b114 120 124 137`);
candles('l-cvd', cvd, LEFT, v => v / 3 - 2);
axis('l-cvd-axis', [['-9.50B', 39.5], ['-10B', 88], ['-10.50B', 135], ['-11B', 183], ['-11.50B', 231]]);

const spot = parse(`
r921 938 945 956 b926 930 940 945 r930 936 989 1029 b946 954 1001 1001 r928 942 948 973 r915 930 954 973
r911 924 983 1015 b926 945 993 998 b935 936 951 956 b878 879 938 942 b825 828 899 909 r819 834 875 890
b853 861 873 888 r842 852 884 904 r858 865 960 976 r933 951 977 1022 b962 975 981 1006 r960 972 976 1017
r938 972 1017 1041 r984 996 1053 1083 r995 1011 1131 1194 r1064 1107 1145 1176 r1143 1158 1263 1329
b1218 1254 1280 1311 r1242 1258 1270 1285 b1263 1266 1288 1304 b1233 1238 1271 1286 r1203 1213 1264 1274
b1230 1245 1263 1275 r1239 1245 1275 1287 r1277 1284 1305 1323 r1286 1293 1304 1311 r1278 1279 1319 1328
b1320 1328 1332 1338 r1305 1312 1337 1347 r1335 1339 1351 1365 b1340 1343 1359 1375 b1314 1353 1356 1377
r1305 1327 1350 1374 r1344 1353 1416 1432 b1386 1393 1418 1428 r1370 1372 1431 1440 b1395 1399 1464 1488
b1384 1396 1438 1476 r1391 1398 1434 1446 r1430 1459 1488 1540 r1455 1463 1494 1520 r1454 1477 1527 1565
b1484 1489 1521 1534 b1479 1485 1494 1512 r1464 1476 1479 1496 r1446 1452 1511 1522 b1486 1497 1512 1530
b1491 1503 1507 1518 b1498 1504 1523 1531 b1443 1455 1529 1535 r1440 1450 1461 1476 b1392 1403 1494 1506
b1362 1384 1405 1420 r1377 1377 1400 1408 r1376 1410 1442 1458 r1437 1438 1491 1495 b1443 1446 1505 1527
b1420 1428 1445 1461 b1377 1378 1440 1464 b1343 1356 1378 1381 b1287 1330 1350 1425 b1277 1299 1335 1364
r1270 1278 1319 1338 r1300 1319 1344 1362 r1322 1332 1353 1368 b1287 1293 1415 1443 b1248 1266 1284 1299
b1215 1245 1275 1287 r1218 1232 1236 1251 b1216 1224 1242 1250 b1206 1212 1224 1230 b1184 1191 1218 1241
b1077 1083 1193 1197 b1059 1071 1074 1113 b1062 1077 1081 1091 r1071 1071 1092 1099 b1060 1077 1101 1106
r1056 1057 1083 1104 r1060 1062 1136 1154 b1088 1107 1140 1188 r1099 1129 1134 1157 r1113 1149 1164 1182
r1141 1159 1202 1220 r1191 1206 1209 1220 r1191 1192 1248 1254 r1236 1240 1278 1292`);
candles('l-spot', spot, LEFT, v => v / 3 - 249);
axis('l-spot-axis', [['-1.25B', 16], ['-1.30B', 58], ['-1.35B', 100], ['-1.40B', 143], ['-1.45B', 185], ['-1.50B', 227], ['-1.55B', 270]]);

const oi = parse(`
b723 735 738 750 r730 735 741 744 r735 739 750 765 r735 747 753 762 b735 744 750 777 r733 744 763 777
r753 762 783 813 b752 762 781 792 r762 763 766 771 r757 765 771 787 b750 759 774 800 b741 750 761 776
b730 741 750 757 r736 741 768 778 r751 765 777 795 r767 777 784 795 b780 780 786 792 b768 778 782 798
b762 774 780 807 r756 774 777 803 r765 777 792 792 b750 780 792 812 b750 762 780 800 b731 746 763 767
r732 747 750 756 b735 744 747 760 r735 741 745 760 r738 744 765 777 r754 765 769 775 r759 767 773 785
b757 759 773 787 r755 759 769 777 r765 768 783 785 b765 771 783 789 r765 770 778 792 b765 771 777 790
b757 759 768 782 b744 753 759 768 r746 753 768 783 r753 767 772 803 b762 768 772 783 r762 770 777 796
b733 756 777 798 b714 732 759 774 b726 729 735 735 b684 711 729 753 r702 711 741 758 r720 738 753 777
r740 753 759 777 b744 750 757 771 b741 747 752 767 r745 747 792 806 b783 786 792 812 b768 777 786 795
b747 759 777 788 b720 729 759 764 r722 729 735 747 r690 732 738 771 b720 729 736 742 r726 729 736 742
r714 733 740 747 r732 735 738 749 b705 711 738 746 b702 705 712 724 b687 699 705 714 r687 699 705 711
b670 684 702 740 r665 684 693 720 r687 692 711 718 b693 709 714 732 r702 709 720 726 b672 690 720 756
r673 690 707 727 b666 702 708 723 r700 702 734 740 b719 726 732 738 b712 722 726 728 b708 716 723 737
b705 710 717 724 r708 711 729 742 b710 723 729 735 b712 720 724 738 b687 696 720 729 r696 697 735 738
r730 735 759 777 b747 756 759 767 b735 750 756 768 b717 735 750 763 r726 735 742 752 b723 729 741 747
r724 729 744 753 r735 742 747 759`);
candles('l-oi', oi, LEFT, v => v / 3 - 25);
axis('l-oi-axis', [['18B', 19.7], ['17B', 75.7], ['16B', 131.7], ['15B', 187.3], ['14B', 243.3]]);

/* ---- net positioning: n = grey, g = long, r = short ---- */
const NET = { n: '#8a8a8a', g: '#56d890', r: '#f0605c' };
`n-20 n195 r-25 n27 n-15 g14 n8 n-14 n-3 n-3 n20 r-8 g5 r-8 n34 g82 n25 g9 g7 n-33 n-14 n8 n-6 n-9 n35 g56 n-15 n-25
n43 r-11 n14 n1 g16 r-25 n-24 r-12 r-9 g7 n-5 n5 r-20 r-92 r-38 r-30 g20 n-30 n30 n20 n-30 g10 n-14 r-20 g10 r-34 g15
n-14 g9 r-6 g22 n-14 n4 r-8 r-10 g5 g5 n12 g7 n-10 n-6 n3 g5 n1 n-50 n28 g18 g28 g42 n2 n38 r-4 r-10 n15 r-8 r-27 n-6
n32 g38 r-8 n10 n-10 n-40 n8 n12 n-12 n68 n-15 g5 n1 n45 n8 r-6 n8 n-3 g62 n-53 n-22 g3 n20 g35 r-3 r-8 n-24 n1`
  .split(/\s+/).forEach((s, i) => {
    const v = +s.slice(1) / 3, c = s[0];
    let o = c === 'n' ? 0.04 + Math.abs(v) / 78 * 0.75 : 0.22 + Math.abs(v) / 78;
    if (i === 103) o = 0.92;
    if (i === 104) o = 0.45;
    add('r-net', 'rect', { x: RIGHT.x0 + i * RIGHT.step - 5, y: v > 0 ? 73.7 - v : 73.7, width: 9.8, height: Math.abs(v), fill: NET[c], opacity: o });
  });
axis('r-net-axis', [['2K', 12.7], ['1.50K', 28.7], ['1000', 44], ['500', 58.7], ['-500', 89.7], ['-1000', 104.7]],
  [['32.00', 72.7, 43, '#5c5c5c', '#fff']]);

const nl = parse(`
w577 577 594 597 w588 592 609 613 b570 570 609 609 w558 570 573 576 w570 573 577 579 b570 573 576 582
w570 574 579 583 w576 579 584 585 w578 584 586 590 w582 584 587 588 b583 584 587 590 b583 585 588 592
w578 583 586 587 b574 582 584 591 w573 582 585 585 b498 530 585 585 w530 531 545 552 b528 540 547 547
b538 541 544 547 w540 541 566 570 w563 564 567 567 w561 564 568 569 w563 565 577 577 w575 576 578 580
w576 577 580 582 b566 573 580 582 w570 572 582 589 w579 581 600 635 w596 600 603 605 b578 580 603 603
w577 579 582 585 w576 579 582 586 b562 564 580 583 b562 562 564 565 w561 561 624 627 w621 623 633 642
b627 630 634 637 b624 627 630 636 b622 625 628 644 w625 627 636 651 b626 630 634 641 b618 624 632 644
b618 621 626 628 b587 600 620 621 b578 588 598 600 w584 586 589 590 w586 588 591 591 w588 590 593 595
w590 592 612 627 b609 611 614 616 b606 608 613 613 b588 591 612 612 b587 590 594 596 b588 590 594 594
b573 577 592 593 w575 577 581 591 b574 575 578 579 b537 540 576 576 b522 525 540 545 w521 525 537 541
w528 537 540 543 w532 537 540 541 b533 537 541 551 b525 528 537 543 b522 525 529 532 w523 525 528 532
b503 523 528 530 w522 523 532 538 w530 532 536 570 w530 534 546 548 w540 543 546 549 w543 544 550 552
w548 551 585 592 w584 586 590 592 b576 577 586 589 b545 549 576 577 b518 520 549 549 w519 521 525 527
w505 523 527 528 b502 504 527 528 b499 502 505 509 w500 502 505 507 w502 503 506 510 b410 412 501 503
w408 412 415 426 w390 415 419 420 b408 415 419 419 b402 404 418 420 w404 405 415 420 w413 415 423 438
w420 423 427 430 w424 426 436 438 w422 434 438 441 w434 437 500 513 w500 501 507 508 w507 507 540 543
b534 537 540 542 w536 537 540 542 w534 537 540 543 w538 539 542 545 b537 540 543 545 b536 540 543 545
b537 540 543 546 b473 476 541 541 w475 476 530 532 w528 531 546 552 b543 546 548 552 b540 545 548 551
b522 525 546 548 b519 522 525 527 b502 503 522 523 w500 503 524 528 w523 525 528 530`);
candles('r-nl', nl, RIGHT, v => v / 3 - 122);
axis('r-nl-axis', [['-5K', 20.7], ['-6K', 44], ['-7K', 67], ['-8K', 90.7]]);

const ns = parse(`
w735 735 738 740 w705 735 896 921 r888 890 898 900 w886 891 912 915 w909 912 916 920 r900 903 915 917
w903 904 914 916 w911 914 918 919 w914 915 917 920 w910 914 918 920 w915 917 935 937 r925 927 935 938
r921 924 928 931 r917 918 924 927 w915 918 945 953 r936 938 945 950 w936 939 942 945 r935 939 942 945
w921 936 939 940 w922 936 940 941 w936 939 945 948 w942 945 948 950 w940 945 948 950 w946 948 963 966
w962 964 992 996 r907 912 992 992 w908 911 914 920 w910 912 915 920 w914 915 960 966 r957 959 963 965
w955 960 966 983 w960 966 971 1017 r950 969 972 981 r924 927 969 969 w921 927 935 938 w933 936 939 945
r927 930 936 941 r924 927 932 936 r884 927 932 936 w918 923 926 930 r888 892 925 927 r801 815 892 895
r762 764 814 816 r758 760 764 775 w758 759 763 764 w756 759 783 786 w780 783 804 806 w803 805 822 825
w818 822 825 828 r814 817 824 826 r813 816 819 822 r811 814 818 820 r805 808 815 817 r774 778 807 808
w774 776 779 782 w773 776 780 783 r770 773 778 782 r768 772 775 778 r765 770 774 782 w757 768 771 772
w765 770 773 785 w766 770 773 776 r761 763 772 774 r759 761 765 806 r759 761 764 783 w758 760 806 808
r804 806 809 822 w796 806 809 812 w802 806 810 813 w804 807 811 813 w805 808 812 813 w802 808 811 814
w805 808 814 820 w812 814 838 842 r836 838 841 843 r832 835 838 843 r828 832 836 838 w828 831 834 836
w830 832 864 872 r856 858 864 867 r847 850 860 862 w846 850 863 868 r852 855 862 865 r842 845 856 859
w843 845 848 852 w840 843 870 872 r827 840 870 871 r706 708 840 842 w706 708 826 828 w822 825 829 831
w826 828 860 882 w858 861 865 868 w862 864 873 900 w870 873 882 885 w880 882 936 939 w935 938 941 944
r938 940 943 952 w938 940 943 948 w940 941 978 983 w975 978 984 992 r963 966 984 986 w965 966 990 995
r976 978 989 992 r967 970 978 980 w968 970 979 981 w976 978 982 985 r976 980 984 992 w980 982 997 1002
r990 993 998 1003 r978 990 994 995 r986 988 991 993 w984 988 991 992 w985 988 992 993`);
candles('r-ns', ns, RIGHT, v => v / 3 - 226);
axis('r-ns-axis', [['6K', 27.7], ['5K', 55.7], ['4K', 84], ['3K', 111.7]]);

/* ---- funding ---- */
const signed = (v, c) => ({ c: c || (v < 0 ? 'r' : 'b'), v: v < 0 ? [0, 0, -v, -v] : [-v, -v, 0, 0] });
candles('r-fund', [75, 113, 100, 87, 74, 81, 77, 94, 100, 98, 98, 86, 83, 36, 18, -6, 22, 15, 4, -16, -3, -34, -30, 24, 36,
 -24, -46, -80, -97, -91, -111, -103, -34, 57, 85, 78, 60, 34, -16, -24, 0, 6, 16, 95, 132, 145, 139, 115, 94, 60, 11, -37,
 -98, -130, -123, -125, -90, -92, -98, -118, -134, -137, -112, -84, -16, 33, 73, 49, 22, -7, -24, -66, -105, -74, -26, 39,
 82, 98, 113, 111, 102, 76, 71, 84, 101, 127, 138, 170, 177, 119, 77, 43, 43, 28, 0, -34, -41, -52, -38, -6, 37, 85, 88,
 107, 73, 55, 69, 53, 51, 31, 7, -2, 8].map(v => signed(v)), RIGHT, v => 68.500 + v / 3);
axis('r-fund-axis', [['0.0', 11.3], ['0.0', 30.7], ['0.0', 50.3], ['0.0', 69.7], ['-0.0', 88.7], ['-0.0', 107.7]],
  [['0', 65.7, 15, '#486be4', '#fff']]);

/* ---- delta volume: value,high,low ---- */
const delta = s => s.trim().split(/\s+/).map(t => {
  const [v, h, l] = t.split(',').map(Number), d = signed(v);
  d.v[0] = -h;
  d.v[3] = -l;
  return d;
});
candles('r-dvs', delta(`3,6,-8 225,238,-3 33,40,-9 55,58,-10 -25,2,-35 -4,3,-14 7,13,-3 -20,0,-25 5,9,-10 6,15,-8 10,17,-20
18,20,-10 8,13,-10 -35,10,-40 46,70,-10 14,28,-52 -13,8,-25 24,27,-50 -3,50,-25 -31,10,-34 2,12,-15 -4,6,-10 4,7,-8
-30,3,-53 25,30,-10 -4,5,-18 -13,8,-25 -32,8,-52 27,33,-15 6,8,-4 32,34,-5 38,40,-5 -21,0,-32 6,12,-8 -15,0,-28
-53,3,-64 -15,8,-40 3,5,-4 -5,5,-26 -25,18,-40 -32,3,-50 -67,10,-103 -20,22,-40 -60,8,-97 14,33,-20 -6,10,-15 12,16,-10
18,20,-10 -28,3,-35 8,16,-10 -16,0,-22 -10,3,-15 -7,5,-10 -21,2,-26 3,6,-10 -13,3,-20 -8,5,-10 7,8,-10 2,23,-10
-12,5,-25 -33,3,-45 13,18,-8 -34,1,-38 37,40,-15 22,28,-10 -20,3,-28 -16,16,-45 -16,4,-30 -26,15,-46 17,20,-8 4,10,-8
-4,5,-8 -33,2,-38 8,14,-10 3,8,-5 10,13,-8 43,45,-5 -4,5,-12 50,56,-5 14,20,-10 -12,2,-20 -18,15,-25 -30,3,-33
32,33,-15 10,16,-5 34,36,-12 10,18,-8 12,34,-40 20,30,-15 -22,3,-35 -12,3,-25 -10,3,-18 67,70,-15 8,20,-8 16,33,-10
-4,6,-8 10,13,-5 5,10,-8 16,18,-10 61,64,-8 3,8,-25 4,8,-8 -10,3,-15 14,23,-8 -14,0,-28 -40,0,-52 18,30,-28 -5,13,-15
-8,18,-22 -24,8,-34 -4,8,-10 -31,2,-36 -20,2,-30`), RIGHT, v => 98.500 + v / 3);
axis('r-dvs-axis', [['200M', 3.7], ['150M', 27.7], ['100M', 51.7], ['50M', 76], ['-50M', 124]], [['-14M', 105.3, 36, '#7aa2f7', '#000']]);

candles('r-dva', delta(`-5,3,-9 192,225,-3 -10,3,-18 20,28,-18 -44,3,-58 5,8,-14 17,21,-8 -26,3,-32 10,14,-20 12,22,-10
19,20,-8 -11,3,-11 26,37,-12 -32,5,-32 23,48,-10 -15,22,-95 -4,14,-32 22,28,-28 8,25,-8 -28,10,-35 -22,8,-35 5,10,-8
-5,0,-8 -6,3,-22 20,22,-6 2,6,-18 -30,5,-40 -48,3,-70 -5,18,-18 -3,6,-22 18,20,-8 34,52,-10 2,6,-12 -8,2,-20 -14,2,-24
-50,3,-55 -15,6,-25 9,10,-8 -4,12,-18 -5,15,-18 -30,5,-50 -90,8,-135 -30,15,-40 -20,12,-55 48,63,-8 -17,5,-26 2,16,-12
5,13,-12 -40,2,-43 4,13,-10 -13,0,-18 -5,3,-10 -4,4,-8 -22,3,-25 26,28,-8 -24,2,-28 -6,3,-20 3,6,-12 13,20,-8
-8,4,-28 -48,0,-75 10,12,-8 -20,3,-32 42,68,-10 78,96,-8 4,10,-22 50,60,-12 -18,8,-35 -20,10,-48 -6,6,-14 13,16,-8
3,6,-8 -77,3,-80 18,24,-25 20,24,-12 22,32,-8 30,33,-8 -16,3,-25 90,92,-6 -8,2,-22 -14,0,-20 20,32,-8 -5,6,-18
8,18,-18 -5,3,-20 48,52,-6 30,38,-10 -6,12,-56 4,18,-22 -8,0,-20 -20,2,-28 3,8,-12 148,155,-25 -5,28,-20 22,64,-18
3,8,-14 6,8,-8 3,6,-8 23,25,-8 12,16,-10 -12,2,-22 -4,10,-8 4,5,-8 14,22,-8 -17,3,-26 -52,0,-68 21,22,-8 12,26,-10
18,40,-8 -8,3,-14 3,8,-8 -12,0,-22 3,8,-10`), RIGHT, v => 88 + v / 3);
axis('r-dva-axis', [['1.20B', .7], ['800M', 29.7], ['400M', 59.7], ['-400M', 118.7]], [['3M', 88.3, 22, '#7aa2f7', '#000']]);

/* ---- liquidations ---- */
const liq = {
  1: [160, 4], 3: [10, 0], 7: [0, 5], 14: [6, 0], 15: [5, 4], 18: [3, 0], 27: [0, 28], 31: [3, 0], 40: [0, 10], 41: [0, 28],
  42: [0, 6], 43: [0, 7], 44: [6, 0], 46: [3, 0], 47: [6, 0], 53: [0, 5], 60: [0, 5], 63: [4, 0], 64: [6, 0], 66: [20, 0],
  68: [0, 5], 72: [0, 6], 78: [5, 0], 92: [13, 4], 93: [6, 0], 94: [9, 0], 105: [0, 6], 108: [4, 0]
};
for (let i = 0; i < 113; i++) {
  const [up, down] = liq[i] || [0, 0], x = RIGHT.x0 + i * RIGHT.step - 4.9;
  add('r-liq', 'rect', { x, y: 61.8, width: 9.8, height: 1, class: i * 7 % 5 < 2 ? 'down' : 'up', opacity: i * 11 % 7 < 4 ? 0.55 : 0.3 });
  if (up) add('r-liq', 'rect', { x, y: 62.3 - up / 3, width: 9.8, height: up / 3, class: 'up' });
  if (down) add('r-liq', 'rect', { x, y: 62.3, width: 9.8, height: down / 3, class: 'down' });
}
axis('r-liq-axis', [['80000000.0', 1.3], ['40000000.0', 32.7], ['-40000000.0', 93.7]], [['-690K', 63, 43, '#ea1e5b', '#000']]);

/* ---- time axes ---- */
function times(id, labels) {
  document.getElementById(id).innerHTML = labels.split(' ').map(t => `<span>${t}</span>`).join('');
}
times('l-times', '08/06 19:00 09/06 06:00 11:00 17:00 22:00 10/06 10:00 15:00 21:00 11/06 08:00 13:00 19:00 12/06 06:00 12:00 17:00 23:00 13/06 10:00 15:00 21:00');
times('r-times', '07/06 08/06 08:00 13:00 19:00 09/06 06:00 11:00 17:00 22:00 10/06 10:00 15:00 21:00 11/06 08:00 13:00 19:00 12/06 06:00 12:00 17:00 23:00 13/06');
```
